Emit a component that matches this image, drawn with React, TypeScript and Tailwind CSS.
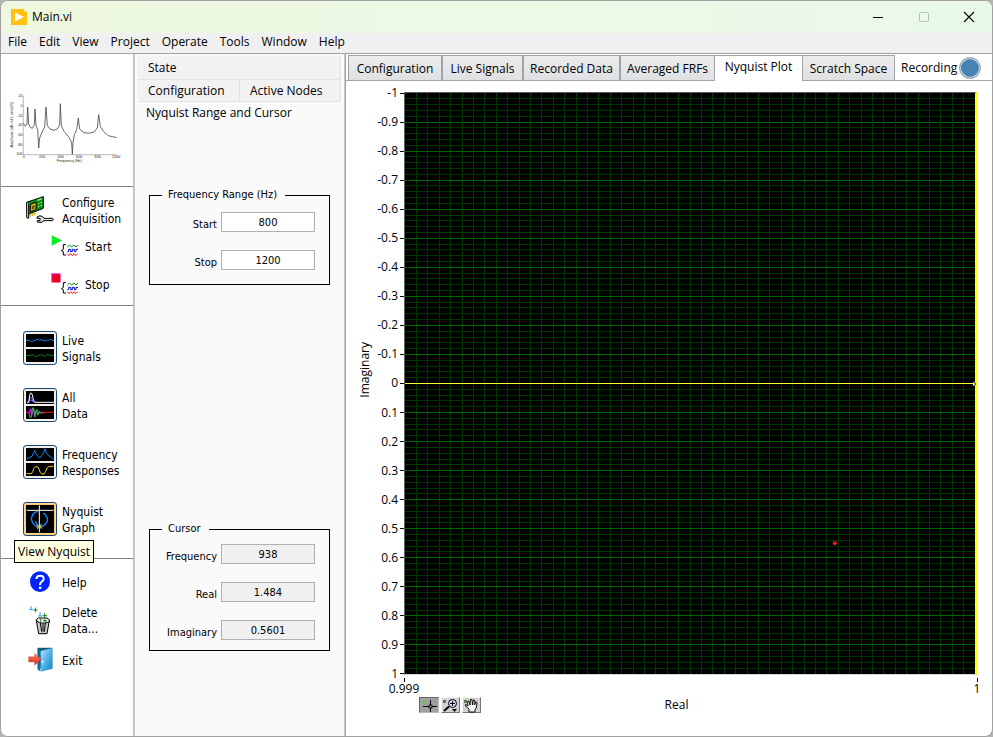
import React, { useState } from "react";

const UI = "font-['Open_Sans','Noto_Sans',sans-serif] text-[12px] leading-[16px]";
const TAHOMA = "font-['DejaVu_Sans_Condensed','DejaVu_Sans',sans-serif]";

const menus = ["File", "Edit", "View", "Project", "Operate", "Tools", "Window", "Help"];

const yLabels = Array.from({ length: 21 }, (_, i) => {
  const v = (i - 10) / 10;
  return String(v);
});

function AppLogo() {
  return (
    <svg width="16" height="16" viewBox="0 0 16 16" aria-hidden="true">
      <path d="M0 0H13L16 3V16H0Z" fill="#ffc20e" />
      <path d="M13 0L16 3H13Z" fill="#ffe48a" />
      <path d="M4 3.5L13 8L4 12.5Z" fill="#fff" />
    </svg>
  );
}

function TitleBar() {
  return (
    <header className="flex h-8 shrink-0 items-center bg-linear-to-r from-[#eef8e0] to-[#e9f9e9] pl-2.5">
      <AppLogo />
      <h1 className={`${UI} ml-[5px] flex-1 font-normal`}>Main.vi</h1>
      <button aria-label="Minimize" className="flex h-8 w-[46px] items-center justify-center">
        <svg width="12" height="12"><path d="M1 6.5H11" stroke="#000" /></svg>
      </button>
      <button aria-label="Maximize" disabled className="flex h-8 w-[45px] items-center justify-center">
        <svg width="12" height="12"><rect x="1.5" y="1.5" width="9" height="9" rx="1" fill="none" stroke="#b4c2b0" /></svg>
      </button>
      <button aria-label="Close" className="flex h-8 w-[46px] items-center justify-center">
        <svg width="12" height="12"><path d="M1 1L11 11M11 1L1 11" stroke="#000" strokeWidth="1.1" /></svg>
      </button>
    </header>
  );
}

const spectrum =
  "M70 130L76 140L81 133L83 82L86 133L91 143L97 146L103 135L105 88L108 138L113 150L116 205L119 175L126 158L134 142L138 82L142 138L150 148L162 152L173 147L179 135L181 72L184 138L192 155L208 174L215 190L217 224L219 190L223 165L230 150L235 115L239 148L250 158L265 161L282 157L292 145L296 105L301 140L310 155L325 168L350 174";

function SpectrumThumb() {
  return (
    <svg width="114" height="72" viewBox="21 40 342 216" className="font-['Liberation_Sans',sans-serif]" fontSize="11" fill="#222">
      <path d="M70 48V225H350" fill="none" stroke="#999" strokeWidth="2" />
      <path d={spectrum} fill="none" stroke="#444" strokeWidth="2.400" />
      {[20, 0, -20, -40, -60, -80, -100].map((v, i) => (
        <text key={v} x="68" y={53 + i * 29} textAnchor="end">{v}</text>
      ))}
      {[0, 200, 400, 600, 800, 1000].map((v, i) => (
        <text key={v} x={71 + i * 55.5} y="236" textAnchor="middle">{v}</text>
      ))}
      <text x="208" y="247" textAnchor="middle">Frequency (Hz)</text>
      <text transform="translate(39 135) rotate(-90)" textAnchor="middle">Amplitude (dB ref 1 (m/s)/N)</text>
    </svg>
  );
}

function BoardIcon() {
  return (
    <svg width="28" height="28" viewBox="78 29 84 84" aria-hidden="true">
      <path d="M80 48L130 31V66L84 84Z" fill="#0a8a1c" stroke="#000" strokeWidth="3" />
      <path d="M80 48V94L86 96V52" fill="#ddd" stroke="#000" strokeWidth="3" />
      <path d="M92 54L108 48V70L92 76Z" fill="#f2d21c" stroke="#000" strokeWidth="3" />
      <path d="M96 58L104 55V67L96 70Z" fill="#7a5a00" />
      <path d="M112 42L126 37M114 52H118M122 49H126M114 61H118M122 58H126" stroke="#b6f06c" strokeWidth="4" />
      <path d="M90 84V91M97 81V89M104 79V86" stroke="#caa800" strokeWidth="4" />
      <path d="M111 92Q119 86 127 90L132 96H158Q162 99 158 103H132Q125 112 112 107V103H120V96H111Z" fill="#ddd" stroke="#000" strokeWidth="3" />
    </svg>
  );
}

function RunIcon({ stop = false }: { stop?: boolean }) {
  return (
    <svg width="28" height="22" viewBox="153 153 84 66" aria-hidden="true">
      {stop ? (
        <><rect x="154" y="154" width="27" height="27" fill="#f0f" /><rect x="157" y="157" width="24" height="24" fill="#e80012" /></>
      ) : (
        <path d="M155 154L186 169.500L155 185Z" fill="#00f020" />
      )}
      <path d="M198 182H190V196L184 200L190 203V213H198" fill="none" stroke="#000" strokeWidth="3" />
      <path d="M202 189L209 183L215 189L222 183L228 189L234 183" fill="none" stroke="#078a18" strokeWidth="3" />
      <path d="M202 203H206V196H212V203H217V196H223V203H228V196H234" fill="none" stroke="#0010c8" strokeWidth="3" />
      <path d="M202 209L207 215L212 209L217 215L222 209L227 215L233 209" fill="none" stroke="#f02020" strokeWidth="3" />
    </svg>
  );
}

function IconFrame({ active = false, children }: { active?: boolean; children: React.ReactNode }) {
  return (
    <svg width="34" height="34" viewBox="0 0 102 102" aria-hidden="true" className="shrink-0">
      <rect x="1.5" y="1.5" width="99" height="99" rx="8" fill={active ? "#ffc35c" : "#f1efe8"} stroke="#124577" strokeWidth="3" />
      {active && <rect x="5" y="5" width="92" height="90" rx="5" fill="none" stroke="#ffe0a0" strokeWidth="3" />}
      {children}
    </svg>
  );
}

function Screens() {
  return <path d="M9 9H93V48H9ZM9 54H93V93H9Z" fill="#000" />;
}

function LiveIcon() {
  return (
    <IconFrame>
      <Screens />
      <path d="M9 28H20L23 31H30L33 28H39L42 25H47L50 28L54 25L58 28H64L67 31L71 28H77L80 25H84L87 28H93" fill="none" stroke="#1686ff" strokeWidth="3" />
      <path d="M9 73H24L27 70L31 73L35 76H42L46 73H52L56 70L60 73L65 76L70 73L75 70L79 73H93" fill="none" stroke="#14781e" strokeWidth="3" />
    </IconFrame>
  );
}

function AllDataIcon() {
  return (
    <IconFrame>
      <Screens />
      <path d="M17 45L20 33L23 39L27 36L31 44" fill="none" stroke="#b000f0" strokeWidth="3" />
      <path d="M15 44H18L20 31L23 27L27 33L30 41" fill="none" stroke="#1686ff" strokeWidth="3" />
      <path d="M12 43H15L18 38L20 22L22 16H26L29 24L31 36L35 43H93" fill="none" stroke="#fff" strokeWidth="3" />
      <path d="M11 72L18 76L23 62L26 84L31 60L35 82L40 68L44 80L50 71L57 75H62" fill="none" stroke="#c010e0" strokeWidth="4" />
      <path d="M18 78L21 88L25 88L28 60L32 60L36 87L40 66L44 66L46 80L50 70L55 76L60 72L65 74H70" fill="none" stroke="#10d030" strokeWidth="3" />
      <path d="M10 73H16M57 73H92" stroke="#f00" strokeWidth="3" />
    </IconFrame>
  );
}

function FrequencyIcon() {
  return (
    <IconFrame>
      <Screens />
      <path d="M12 41L20 37L27 34L32 23L35 16L38 24L44 33L50 39L56 31L62 24L66 11L70 23L77 32L85 37L91 42" fill="none" stroke="#1686ff" strokeWidth="3" />
      <path d="M11 86H25L29 80L33 70L38 65H43L48 72L52 83L57 87H63L68 79L73 68L79 64H91" fill="none" stroke="#f8d628" strokeWidth="3" />
    </IconFrame>
  );
}

function NyquistIcon() {
  return (
    <IconFrame active>
      <path d="M9 9H93V93H9Z" fill="#000" />
      <path d="M11 25H92M49 10V91" stroke="#fff" strokeWidth="3" />
      <path d="M49 76L38 72L29 63L25 50L29 38L37 30L45 28M61 33L68 39L73 49V58L67 67L59 73L49 76L43 68L37 58M49 76L55 67" fill="none" stroke="#1686ff" strokeWidth="4" />
      <path d="M42 67L56 81M56 67L42 81M40 75H58" stroke="#ffe040" strokeWidth="2.500" />
    </IconFrame>
  );
}

function HelpIcon() {
  return (
    <svg width="20" height="22" viewBox="0 0 60 66" aria-hidden="true">
      <ellipse cx="30" cy="32" rx="30" ry="31" fill="#0324ff" />
      <path d="M19 24Q20 14 30 14Q42 14 41 24Q41 29 34 33Q30 36 30 42" fill="none" stroke="#fff" strokeWidth="6" />
      <rect x="27" y="47" width="7" height="7" fill="#fff" />
    </svg>
  );
}

function TrashIcon() {
  return (
    <svg width="23" height="29" viewBox="78 134 69 87" aria-hidden="true">
      <path d="M84 135V145M79 145H90M111 152V164M106 164H117" stroke="#1696f0" strokeWidth="3" />
      <path d="M97 139V153M92 146H104M125 155V169M119 163H132" stroke="#128020" strokeWidth="3" />
      <path d="M100 178L107 217H132L139 178Z" fill="#c8c8c8" stroke="#000" strokeWidth="3" />
      <path d="M112 185L116 211M127 185L124 211M120 187V211" stroke="#000" strokeWidth="3" />
      <path d="M100 179V175L106 170H132L139 175V181Q119 191 100 179Z" fill="#eee" stroke="#000" strokeWidth="3" />
      <path d="M113 173V181M121 178H131M126 173V184" stroke="#128020" strokeWidth="3" />
    </svg>
  );
}

function ExitIcon() {
  return (
    <svg width="25" height="25" viewBox="82 262 75 75" aria-hidden="true">
      <defs>
        <linearGradient id="door" x2="1" y2="1"><stop stopColor="#b9e8ff" /><stop offset=".6" stopColor="#3fa8e0" /><stop offset="1" stopColor="#0c83c8" /></linearGradient>
        <linearGradient id="arrow" x2="0" y2="1"><stop stopColor="#ff8a70" /><stop offset="1" stopColor="#d8200c" /></linearGradient>
      </defs>
      <path d="M111 264H155V326H111Z" fill="#175b80" />
      <path d="M111 264L119 273V335L111 330Z" fill="#0d6ca4" />
      <path d="M120 274L155 265V327L120 336Z" fill="url(#door)" />
      <circle cx="126" cy="306" r="3" fill="#fff" />
      <path d="M84 291H102V281L121 299L102 317V307H84Z" fill="url(#arrow)" stroke="#c83222" strokeWidth="1" />
    </svg>
  );
}

interface SideButtonProps {
  icon: React.ReactNode;
  label: string;
  indent?: boolean;
  tooltip?: string;
}

function SideButton({ icon, label, indent = false, tooltip }: SideButtonProps) {
  return (
    <button className={`${TAHOMA} relative flex items-center text-left text-[12px] leading-[16px] ${indent ? "ml-[49px]" : "ml-5"}`}>
      <span className={`flex shrink-0 items-center justify-center ${indent ? "mr-[5px] w-[30px]" : "mr-[3px] w-[38px]"}`}>{icon}</span>
      <span className="pt-0.5 whitespace-pre-line">{label}</span>
      {tooltip && (
        <span role="tooltip" className={`${UI} absolute top-[38px] -left-[7px] z-10 border border-black bg-[#ffffe1] px-[3px] pt-[3px] pb-0.5 whitespace-nowrap`}>
          {tooltip}
        </span>
      )}
    </button>
  );
}

function Sidebar() {
  return (
    <nav className="flex w-[133px] shrink-0 flex-col border-r border-[#c0c0c0] bg-white">
      <section className="h-[133px] border-b border-[#808080] pt-[39px] pl-1.5">
        <SpectrumThumb />
      </section>
      <section className="flex h-[119px] flex-col items-start border-b border-[#808080] pt-1.5">
        <SideButton icon={<BoardIcon />} label={"Configure\nAcquisition"} />
        <div className="mt-2 flex flex-col gap-4">
          <SideButton indent icon={<RunIcon />} label="Start" />
          <SideButton indent icon={<RunIcon stop />} label="Stop" />
        </div>
      </section>
      <section className="flex h-[253px] flex-col items-start gap-[23px] border-b border-[#808080] pt-[25px]">
        <SideButton icon={<LiveIcon />} label={"Live\nSignals"} />
        <SideButton icon={<AllDataIcon />} label={"All\nData"} />
        <SideButton icon={<FrequencyIcon />} label={"Frequency\nResponses"} />
        <SideButton icon={<NyquistIcon />} label={"Nyquist\nGraph"} tooltip="View Nyquist" />
      </section>
      <section className="flex flex-col items-start gap-2.5 pt-3">
        <SideButton icon={<HelpIcon />} label="Help" />
        <SideButton icon={<TrashIcon />} label={"Delete\nData..."} />
        <SideButton icon={<ExitIcon />} label="Exit" />
      </section>
    </nav>
  );
}

function Field({ label, value, readOnly = false }: { label: string; value: string; readOnly?: boolean }) {
  const [text, setText] = useState(value);
  return (
    <label className="flex h-5 items-center justify-end gap-1">
      <span className="pt-[5px]">{label}</span>
      <input
        value={text}
        readOnly={readOnly}
        onChange={(e) => setText(e.target.value)}
        className={`h-5 w-[94px] border border-[#adb0b6] text-center ${readOnly ? "bg-[#f0f0f0]" : "bg-white"}`}
      />
    </label>
  );
}

function Group({ title, roomy = false, children }: { title: string; roomy?: boolean; children: React.ReactNode }) {
  return (
    <fieldset className={`${TAHOMA} mx-3.5 border border-black pr-3.5 text-[11px] leading-[14px] ${roomy ? "pt-0.5 pb-3.5" : "pb-2.5"}`}>
      <legend className="ml-3 pr-2 pl-1.5">{title}</legend>
      <div className="flex flex-col gap-[18px] pt-2">{children}</div>
    </fieldset>
  );
}

function StatePanel() {
  return (
    <aside className={`${UI} flex w-[211px] shrink-0 flex-col border-r border-l border-[#c8c8c8] bg-[#fafafa] pt-0.5`}>
      <div role="tablist" className="mx-[3px] flex flex-wrap bg-[#f2f2f2]">
        <button role="tab" className="h-6 w-full border-r border-b border-[#e3e3e3] pl-2.5 text-left">State</button>
        <button role="tab" className="h-[21px] w-[102px] border-r border-[#e3e3e3] pl-2.5 text-left">Configuration</button>
        <button role="tab" className="h-[21px] flex-1 border-r border-[#e3e3e3] pl-2.5 text-left">Active Nodes</button>
        <button role="tab" aria-selected="true" className="h-[22px] w-full border-t border-[#e3e3e3] bg-[#fafafa] pl-2 text-left">Nyquist Range and Cursor</button>
      </div>
      <div className="flex flex-1 flex-col pt-[65px]">
        <Group title="Frequency Range (Hz)" roomy>
          <Field label="Start" value="800" />
          <Field label="Stop" value="1200" />
        </Group>
        <div className="h-[237px]" />
        <Group title="Cursor">
          <Field label="Frequency" value="938" readOnly />
          <Field label="Real" value="1.484" readOnly />
          <Field label="Imaginary" value="0.5601" readOnly />
        </Group>
      </div>
    </aside>
  );
}

const viewTabs = [
  { name: "Configuration", width: "w-[94px]" },
  { name: "Live Signals", width: "w-[81px]" },
  { name: "Recorded Data", width: "w-[97px]" },
  { name: "Averaged FRFs", width: "w-[95px]" },
  { name: "Nyquist Plot", width: "w-[87px]" },
  { name: "Scratch Space", width: "w-[93px]" },
];

function ViewTabs() {
  return (
    <div className="flex h-[27px] shrink-0 items-end border-b border-[#a0a3a8] pl-0.5 whitespace-nowrap">
      <div role="tablist" className="flex h-[25px]">
        {viewTabs.map((t) => {
          const selected = t.name === "Nyquist Plot";
          return (
            <button
              key={t.name}
              role="tab"
              aria-selected={selected}
              className={`${t.width} border-t border-[#a0a3a8] ${selected ? "-mb-px bg-white pb-1" : "border-r border-l bg-linear-to-b from-[#ededee] to-[#dfe0e2] pt-px"}`}
            >
              {t.name}
            </button>
          );
        })}
      </div>
      <div className="flex h-[25px] items-center gap-0.5 pl-1.5">
        <span>Recording</span>
        <span className="size-[22px] rounded-full border border-[#a8a8a8] bg-[#4682b4] ring-1 ring-[#e0e0e0] ring-inset" />
      </div>
    </div>
  );
}

function PlotCanvas() {
  const columns = Array.from({ length: 49 }, (_, i) => (i + 1) * 2);
  const rows = Array.from({ length: 99 }, (_, i) => i + 1);
  return (
    <svg width="100%" height="100%" shapeRendering="crispEdges" className="absolute inset-0" role="img" aria-label="Nyquist plot">
      <rect width="100%" height="100%" fill="#000" />
      {rows.filter((r) => r % 5).map((r) => (
        <line key={r} x1="0" x2="100%" y1={`${r}%`} y2={`${r}%`} stroke="#003500" />
      ))}
      {columns.map((c) => (
        <line key={c} y1="0" y2="100%" x1={`${c}%`} x2={`${c}%`} stroke="#003500" />
      ))}
      {rows.filter((r) => r % 5 === 0).map((r) => (
        <line key={r} x1="0" x2="100%" y1={`${r}%`} y2={`${r}%`} stroke="#006800" />
      ))}
      <line x1="0" x2="100%" y1="50%" y2="50%" stroke="#ffff30" />
      <circle cx="75.400%" cy="77.500%" r="2" fill="#e81c1c" shapeRendering="auto" />
    </svg>
  );
}

function Palette() {
  const raised = "flex h-4 w-[19px] items-center justify-center border border-t-[#f4f4f4] border-r-[#777] border-b-[#777] border-l-[#f4f4f4] bg-[#d2d2d2]";
  return (
    <div className="flex gap-0.5">
      <button aria-label="Cursor" className="flex h-4 w-[20px] items-center justify-center border border-t-[#666] border-r-[#bbb] border-b-[#bbb] border-l-[#666] bg-[#a0a0a0]">
        <svg width="17" height="15"><path d="M2 8.500H16M9.500 2V14" stroke="#000" /><rect x="8" y="7" width="3" height="3" fill="#777" stroke="#000" strokeWidth=".7" /><rect x="2" y="2" width="3" height="3" fill="#4be01c" /></svg>
      </button>
      <button aria-label="Zoom" className={raised}>
        <svg width="17" height="15"><rect x="1" y="2" width="3" height="3" fill="#577a4c" /><path d="M2 13L7 8.500" stroke="#000" strokeWidth="2" /><circle cx="10.500" cy="5.500" r="4" fill="#d4d8ff" stroke="#000" /><path d="M8 5.500H13M10.500 3V8" stroke="#000" /><path d="M10 11H15L12.500 14Z" fill="#000" /></svg>
      </button>
      <button aria-label="Pan" className={raised}>
        <svg width="17" height="15"><rect x="1" y="2" width="3" height="3" fill="#577a4c" /><path d="M6 14V11L2.500 8V6.500L5 8L4.500 3.500L6 3L7 7L7.500 1.500H9L9.500 7L10.500 2L12 2.500L11.500 7L13 4L14 4.500L13.500 9L12 12V14Z" fill="#f5f5f5" stroke="#000" strokeWidth=".9" /></svg>
      </button>
    </div>
  );
}

function NyquistPlot() {
  return (
    <div className="flex flex-1 flex-col pt-[11px] pr-[15px] pb-[23px]">
      <div className="flex flex-1">
        <div className="flex w-9 shrink-0 items-center justify-center pb-7 pl-px">
          <span className="rotate-180 [writing-mode:vertical-rl]">Imaginary</span>
        </div>
        <div className="flex w-[22px] shrink-0 flex-col justify-between py-px leading-[12px]">
          {yLabels.map((l) => (
            <div key={l} className="flex h-0 items-center justify-end gap-0.5">
              <span>{l}</span>
              <span className="h-px w-1 shrink-0 bg-black" />
            </div>
          ))}
        </div>
        <div className="relative flex-1 border-t border-r-2 border-b border-l border-t-[#606060] border-r-[#ffff00] border-b-[#d8d8d8] border-l-[#606060]">
          <PlotCanvas />
          <svg width="5" height="7" className="absolute top-1/2 -right-0.5 -translate-y-1/2"><path d="M1 1L4 3.500L1 6" fill="#fff" stroke="#333" /></svg>
        </div>
      </div>
      <div className="mt-[3px] ml-[58px] flex h-[19px] justify-between">
        <div className="flex w-0 flex-col items-center"><span className="h-1 w-px shrink-0 bg-black" /><span className="leading-[14px]">0.999</span></div>
        <div className="flex w-0 flex-col items-center"><span className="h-1 w-px shrink-0 bg-black" /><span className="leading-[14px]">1</span></div>
      </div>
      <div className="ml-[73px] grid grid-cols-[1fr_auto_1fr] items-center pr-[43px]">
        <Palette />
        <span>Real</span>
      </div>
    </div>
  );
}

export default function App() {
  return (
    <div className="min-h-screen bg-[#b5b5b5]">
      <div className={`${UI} flex min-h-screen flex-col overflow-hidden rounded-lg border border-[#a0a0a0] bg-white text-black`}>
        <TitleBar />
        <div role="menubar" className="flex h-[21px] shrink-0 items-center gap-3 border-b border-[#a0a3a8] bg-[#f0f0f0] pb-0.5 pl-[7px]">
          {menus.map((m) => (
            <button key={m} role="menuitem">{m}</button>
          ))}
        </div>
        <div className="flex flex-1">
          <Sidebar />
          <StatePanel />
          <main className="flex min-w-0 flex-1 flex-col border-l border-[#a0a3a8]">
            <ViewTabs />
            <NyquistPlot />
          </main>
        </div>
      </div>
    </div>
  );
}
